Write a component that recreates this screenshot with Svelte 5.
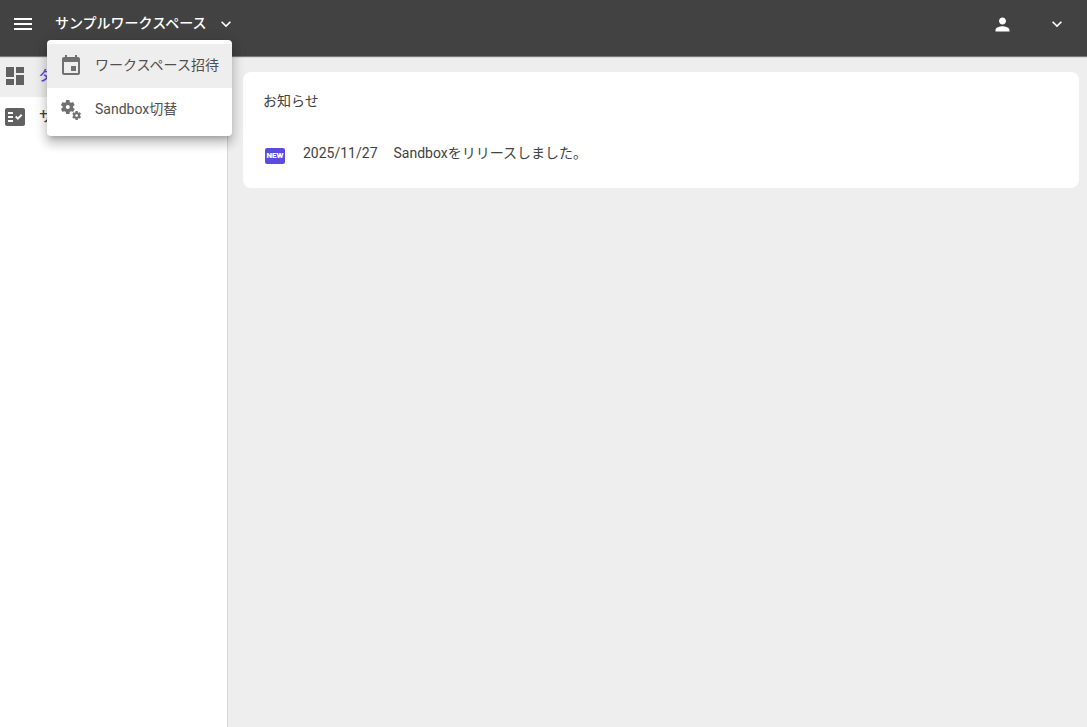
<script>
  let menuOpen = $state(true);
  let sidebarOpen = $state(true);

  const icons = {
    menu: 'M3 18h18v-2H3v2zm0-5h18v-2H3v2zm0-7v2h18V6H3z',
    expand: 'M16.59 8.59L12 13.17 7.41 8.59 6 10l6 6 6-6z',
    person: 'M12 12c2.21 0 4-1.79 4-4s-1.79-4-4-4-4 1.79-4 4 1.79 4 4 4zm0 2c-2.67 0-8 1.34-8 4v2h16v-2c0-2.66-5.33-4-8-4z',
    dashboard: 'M3 13h8V3H3v10zm0 8h8v-6H3v6zm10 0h8V11h-8v10zm0-18v6h8V3h-8z',
    factCheck: 'M20 3H4c-1.1 0-2 .9-2 2v14c0 1.1.9 2 2 2h16c1.1 0 2-.9 2-2V5c0-1.1-.9-2-2-2zM10 17H5v-2h5v2zm0-4H5v-2h5v2zm0-4H5V7h5v2zm4.82 6L12 12.16l1.41-1.41 1.41 1.42L17.99 9l1.42 1.42L14.82 15z',
    event: 'M17 12h-5v5h5v-5zM16 1v2H8V1H6v2H5c-1.11 0-1.99.9-1.99 2L3 19c0 1.1.89 2 2 2h14c1.1 0 2-.9 2-2V5c0-1.1-.9-2-2-2h-1V1h-2zm3 18H5V8h14v11z',
    services: 'M14.17 13.71l1.4-2.42c.09-.15.05-.34-.08-.45l-1.48-1.16c.03-.22.05-.45.05-.68s-.02-.46-.05-.69l1.48-1.16c.13-.11.17-.3.08-.45l-1.4-2.42c-.09-.15-.27-.21-.43-.15L12 4.83c-.36-.28-.75-.51-1.18-.69l-.26-1.85C10.53 2.13 10.38 2 10.21 2h-2.8c-.17 0-.32.13-.35.3L6.8 4.15c-.42.18-.82.41-1.18.69l-1.74-.7c-.16-.06-.34 0-.43.15l-1.4 2.42c-.09.15-.05.34.08.45l1.48 1.16c-.03.22-.05.45-.05.68s.02.46.05.69l-1.48 1.16c-.13.11-.17.3-.08.45l1.4 2.42c.09.15.27.21.43.15l1.74-.7c.36.28.75.51 1.18.69l.26 1.85c.03.16.18.29.35.29h2.8c.17 0 .32-.13.35-.3l.26-1.85c.42-.18.82-.41 1.18-.69l1.74.7c.16.06.34 0 .43-.15zM8.81 11c-1.1 0-2-.9-2-2s.9-2 2-2 2 .9 2 2-.9 2-2 2zM21.92 18.67l-.96-.74c.02-.14.04-.29.04-.44 0-.15-.01-.3-.04-.44l.95-.74c.08-.07.11-.19.05-.29l-.9-1.55c-.05-.1-.17-.13-.28-.1l-1.11.45c-.23-.18-.48-.33-.76-.44l-.17-1.18c-.01-.12-.11-.2-.21-.2h-1.79c-.11 0-.21.08-.22.19l-.17 1.18c-.27.12-.53.26-.76.44l-1.11-.45c-.1-.04-.22 0-.28.1l-.9 1.55c-.05.1-.04.22.05.29l.95.74c-.02.14-.03.29-.03.44 0 .15.01.3.03.44l-.95.74c-.08.07-.11.19-.05.29l.9 1.55c.05.1.17.13.28.1l1.11-.45c.23.18.48.33.76.44l.17 1.18c.02.11.11.19.22.19h1.79c.11 0 .21-.08.22-.19l.17-1.18c.27-.12.53-.26.75-.44l1.12.45c.1.04.22 0 .28-.1l.9-1.55c.06-.09.03-.21-.05-.28zm-4.29.16c-.74 0-1.35-.6-1.35-1.35s.6-1.35 1.35-1.35 1.35.6 1.35 1.35-.61 1.35-1.35 1.35z'
  };

  const navItems = [
    { label: 'ダッシュボード', icon: 'dashboard', active: true },
    { label: 'サービス', icon: 'factCheck', active: false }
  ];

  const menuItems = [
    { label: 'ワークスペース招待', icon: 'event', focused: true },
    { label: 'Sandbox切替', icon: 'services', focused: false }
  ];

  const news = [{ date: '2025/11/27', text: 'Sandboxをリリースしました。' }];
</script>

{#snippet icon(name, size = 24)}
  <svg width={size} height={size} viewBox="0 0 24 24" fill="currentColor" aria-hidden="true">
    <path d={icons[name]} />
  </svg>
{/snippet}

<div class="app">
  <header class="topbar">
    <button class="icon-btn" aria-label="メニュー" onclick={() => (sidebarOpen = !sidebarOpen)}>
      {@render icon('menu')}
    </button>
    <div class="workspace">
      <button class="workspace-btn" aria-expanded={menuOpen} onclick={() => (menuOpen = !menuOpen)}>
        <span class="label">サンプルワークスペース</span>
        {@render icon('expand', 20)}
      </button>
      {#if menuOpen}
        <div class="menu" role="menu">
          {#each menuItems as item}
            <button class="menu-item" class:focused={item.focused} role="menuitem" onclick={() => (menuOpen = false)}>
              {@render icon(item.icon)}
              <span class="label">{item.label}</span>
            </button>
          {/each}
        </div>
      {/if}
    </div>
    <button class="account-btn" aria-label="アカウント">
      {@render icon('person', 21)}
      {@render icon('expand', 20)}
    </button>
  </header>

  <div class="body">
    {#if sidebarOpen}
      <nav class="sidebar">
        {#each navItems as item}
          <a class="nav-item" class:active={item.active} href="#{item.icon}">
            {@render icon(item.icon)}
            <span class="label">{item.label}</span>
          </a>
        {/each}
      </nav>
    {/if}

    <main class="content">
      <section class="card">
        <h2>お知らせ</h2>
        <ul>
          {#each news as entry}
            <li>
              <span class="new">NEW</span>
              <time>{entry.date}</time>
              <span>{entry.text}</span>
            </li>
          {/each}
        </ul>
      </section>
    </main>
  </div>
</div>

<style>
  :global(body) {
    margin: 0;
    background: #eee;
  }
  .app {
    display: flex;
    flex-direction: column;
    min-height: 100vh;
    font-family: Roboto, 'Noto Sans CJK JP', sans-serif;
    font-size: 14px;
    line-height: 20px;
    color: #424242;
  }
  svg {
    display: block;
    flex: none;
  }
  button {
    border: 0;
    padding: 0;
    background: none;
    color: inherit;
    font: inherit;
    cursor: pointer;
  }
  .label {
    padding-bottom: 2px;
    white-space: nowrap;
  }
  .topbar {
    position: relative;
    z-index: 2;
    display: flex;
    align-items: center;
    height: 56px;
    padding: 0 20px 8px 11px;
    box-sizing: border-box;
    background: #424242;
    color: #fff;
    box-shadow: 0 1px 1px rgba(0, 0, 0, 0.5);
  }
  .workspace {
    position: relative;
    margin-left: 12px;
  }
  .workspace-btn {
    display: flex;
    align-items: center;
    gap: 10px;
    height: 32px;
    padding: 0 8px;
    font-weight: 500;
  }
  .menu {
    position: absolute;
    top: 100%;
    left: 0;
    padding: 4px 0;
    border-radius: 4px;
    background: #fff;
    box-shadow:
      0 5px 5px -3px rgba(0, 0, 0, 0.2),
      0 8px 10px 1px rgba(0, 0, 0, 0.14),
      0 3px 14px 2px rgba(0, 0, 0, 0.12);
  }
  .menu-item {
    display: flex;
    align-items: center;
    gap: 12px;
    width: 100%;
    height: 44px;
    padding: 0 13px 0 12px;
    color: #4f4f4f;
  }
  .menu-item.focused {
    background: #eee;
  }
  .menu-item svg {
    color: #707070;
  }
  .account-btn {
    display: flex;
    align-items: center;
    gap: 34px;
    margin-left: auto;
  }
  .body {
    display: flex;
    flex: 1;
  }
  .sidebar {
    flex: none;
    width: 228px;
    box-sizing: border-box;
    border-right: 1px solid #d6d6d6;
    background: #fff;
  }
  .nav-item {
    display: flex;
    align-items: center;
    gap: 12px;
    height: 41px;
    padding: 0 3px 1px;
    box-sizing: border-box;
    color: #424242;
    font-weight: 500;
    text-decoration: none;
  }
  .nav-item svg {
    color: #616161;
  }
  .nav-item.active {
    background: #eee;
    color: #5b4be0;
  }
  .content {
    flex: 1;
    min-width: 0;
    padding: 16px 8px 16px 15px;
  }
  .card {
    padding: 19px 20px 22px;
    border-radius: 8px;
    background: #fff;
  }
  h2 {
    margin: 0 0 29px;
    font-size: 14px;
    font-weight: 400;
  }
  ul {
    margin: 0;
    padding: 0;
    list-style: none;
  }
  li {
    display: flex;
    align-items: center;
    gap: 16px;
    min-height: 26px;
  }
  .new {
    width: 20px;
    height: 16px;
    margin: 6px 2px 0;
    border-radius: 2px;
    background: #5b4be0;
    color: #fff;
    font-size: 8px;
    font-weight: 900;
    line-height: 16px;
    text-align: center;
  }
</style>
